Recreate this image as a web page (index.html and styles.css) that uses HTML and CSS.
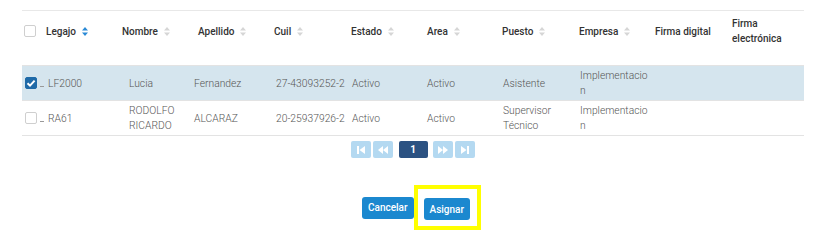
FILE: index.html
```html
<!DOCTYPE html>
<html>
<head>
<meta charset="utf-8">
<link rel="stylesheet" href="styles.css">
</head>
<body>
<div class="wrap">
  <div class="thead">
    <div class="th th-check"><span class="cb"></span></div>
    <div class="th">Legajo <svg class="sort active" width="6" height="9" viewBox="0 0 6 9"><path d="M0 3.5L3 0L6 3.5Z M0 5.5L3 9L6 5.5Z"/></svg></div>
    <div class="th">Nombre <svg class="sort" width="6" height="9" viewBox="0 0 6 9"><path d="M0 3.5L3 0L6 3.5Z M0 5.5L3 9L6 5.5Z"/></svg></div>
    <div class="th">Apellido <svg class="sort" width="6" height="9" viewBox="0 0 6 9"><path d="M0 3.5L3 0L6 3.5Z M0 5.5L3 9L6 5.5Z"/></svg></div>
    <div class="th">Cuil <svg class="sort" width="6" height="9" viewBox="0 0 6 9"><path d="M0 3.5L3 0L6 3.5Z M0 5.5L3 9L6 5.5Z"/></svg></div>
    <div class="th">Estado <svg class="sort" width="6" height="9" viewBox="0 0 6 9"><path d="M0 3.5L3 0L6 3.5Z M0 5.5L3 9L6 5.5Z"/></svg></div>
    <div class="th">Area <svg class="sort" width="6" height="9" viewBox="0 0 6 9"><path d="M0 3.5L3 0L6 3.5Z M0 5.5L3 9L6 5.5Z"/></svg></div>
    <div class="th">Puesto <svg class="sort" width="6" height="9" viewBox="0 0 6 9"><path d="M0 3.5L3 0L6 3.5Z M0 5.5L3 9L6 5.5Z"/></svg></div>
    <div class="th">Empresa <svg class="sort" width="6" height="9" viewBox="0 0 6 9"><path d="M0 3.5L3 0L6 3.5Z M0 5.5L3 9L6 5.5Z"/></svg></div>
    <div class="th">Firma digital</div>
    <div class="th">Firma<br>electrónica</div>
  </div>

  <div class="tr selected">
    <div class="td td-check"><span class="cb checked"><svg width="12" height="12" viewBox="0 0 12 12"><path d="M2.5 6.2L5 8.6L9.6 3.6" fill="none" stroke="#fff" stroke-width="2"/></svg></span><span class="dash"></span></div>
    <div class="td">LF2000</div>
    <div class="td">Lucia</div>
    <div class="td">Fernandez</div>
    <div class="td">27-43093252-2</div>
    <div class="td">Activo</div>
    <div class="td">Activo</div>
    <div class="td">Asistente</div>
    <div class="td brk">Implementacion</div>
    <div class="td"></div>
  </div>

  <div class="tr">
    <div class="td td-check"><span class="cb"></span><span class="dash"></span></div>
    <div class="td">RA61</div>
    <div class="td">RODOLFO RICARDO</div>
    <div class="td">ALCARAZ</div>
    <div class="td">20-25937926-2</div>
    <div class="td">Activo</div>
    <div class="td">Activo</div>
    <div class="td">Supervisor Técnico</div>
    <div class="td brk">Implementacion</div>
    <div class="td"></div>
  </div>

  <div class="pager">
    <span class="pbtn"><svg width="8" height="8" viewBox="0 0 8 8"><path d="M0 0H2V8H0Z M8 0V8L2.5 4Z" fill="#fff"/></svg></span>
    <span class="pbtn"><svg width="10" height="8" viewBox="0 0 10 8"><path d="M5 0V8L0 4Z M10 0V8L5 4Z" fill="#fff"/></svg></span>
    <span class="pbtn page">1</span>
    <span class="pbtn"><svg width="10" height="8" viewBox="0 0 10 8"><path d="M0 0V8L5 4Z M5 0V8L10 4Z" fill="#fff"/></svg></span>
    <span class="pbtn"><svg width="8" height="8" viewBox="0 0 8 8"><path d="M0 0V8L5.5 4Z M6 0H8V8H6Z" fill="#fff"/></svg></span>
  </div>

  <div class="actions">
    <button class="btn">Cancelar</button>
    <span class="highlight"><button class="btn">Asignar</button></span>
  </div>
</div>
</body>
</html>
```

FILE: styles.css
```css
* { box-sizing: border-box; }
body {
  margin: 0;
  background: #fff;
  font-family: Roboto, "Liberation Sans", sans-serif;
  font-size: 10px;
}
.wrap {
  padding: 10px 12px 0 22px;
}
.thead, .tr {
  display: grid;
}
.thead {
  grid-template-columns: 24px 76px 76px 76px 77px 76px 75px 77px 76px 77px 1fr;
  height: 56px;
  border-top: 1px solid #e8e8e8;
  border-bottom: 1px solid #e3e3e3;
  padding-bottom: 14px;
  align-items: center;
}
.th {
  font-weight: 500;
  color: #333;
  line-height: 15px;
  display: flex;
  align-items: center;
  gap: 6px;
}
.thead .th:last-child { display: block; }
.th-check { padding-left: 2px; }
.sort { fill: #d6d6d6; }
.sort.active { fill: #2a8ad6; }

.tr {
  grid-template-columns: 26px 81px 65px 82px 76px 75px 76px 77px 69px 1fr;
  height: 35px;
  border-bottom: 1px solid #e3e3e3;
  align-items: center;
}
.tr.selected { background: #d5e5ee; }
.td {
  color: #555;
  font-weight: 300;
  font-size: 10.3px;
  line-height: 15px;
  padding-right: 4px;
}
.td.brk { word-break: break-all; padding-right: 0; }
.td-check {
  display: flex;
  align-items: center;
  padding-left: 3px;
}
.cb {
  display: inline-block;
  width: 12px;
  height: 12px;
  border: 1px solid #cfcfcf;
  border-radius: 2px;
  background: #fff;
}
.cb.checked {
  background: #1f6aa8;
  border-color: #1f6aa8;
  position: relative;
}
.cb.checked svg { position: absolute; left: -1px; top: -1px; }
.dash {
  display: inline-block;
  width: 4px;
  height: 1px;
  background: #999;
  margin: 6px 0 0 3px;
}

.pager {
  display: flex;
  justify-content: center;
  gap: 2px;
  margin-top: 5px;
  padding-right: 1px;
}
.pbtn {
  width: 20px;
  height: 17px;
  background: #b4d9f1;
  border-radius: 2px;
  display: flex;
  align-items: center;
  justify-content: center;
}
.pbtn.page {
  width: 29px;
  background: #2c5282;
  color: #fff;
  font-weight: bold;
  margin: 0 3px 0 4px;
}

.actions {
  display: flex;
  justify-content: center;
  align-items: center;
  margin-top: 27px;
  padding-left: 17px;
}
.btn {
  font-family: Roboto, "Liberation Sans", sans-serif;
  font-size: 10px;
  font-weight: 500;
  color: #fff;
  background: #1b88cf;
  border: none;
  border-radius: 3px;
  height: 22px;
  padding: 0 6px;
}
.highlight {
  display: inline-block;
  border: 4px solid #ffff00;
  padding: 9px 7px 6px 6px;
}
.highlight .btn { display: block; }
```
